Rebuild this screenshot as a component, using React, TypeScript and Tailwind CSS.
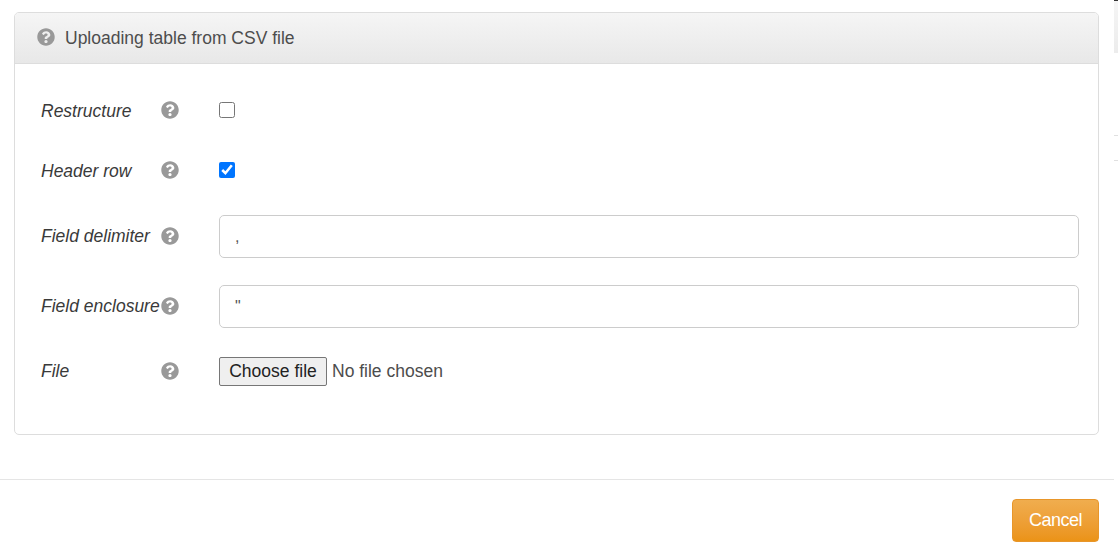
import { FaQuestionCircle } from "react-icons/fa";

function Row({
  label,
  h,
  mb,
  labelShift,
  iconShift,
  children,
}: {
  label: string;
  h: string;
  mb: string;
  labelShift: string;
  iconShift: string;
  children: React.ReactNode;
}) {
  return (
    <div className={`flex items-center ${h} ${mb}`}>
      <label className={`w-[120px] shrink-0 text-[17.5px] leading-[22px] italic text-[#3a3a3a] whitespace-nowrap ${labelShift}`}>{label}</label>
      <FaQuestionCircle className={`w-[18px] h-[18px] text-[#999] shrink-0 ${iconShift}`} />
      <div className="ml-[40px] flex-1 flex items-center">{children}</div>
    </div>
  );
}

const inputCls =
  "w-full h-[43px] border border-[#ccc] rounded-[5px] bg-white pl-[15px] pr-3 text-[16px] text-[#555] outline-none";

export default function App() {
  return (
    <div className="flex w-[1118px] h-[556px] bg-white overflow-hidden font-['Liberation_Sans',Arial,sans-serif]">
      <div className="w-[1114px] shrink-0 flex flex-col">
        <div className="pt-[12px] pl-[14px] pr-[15px]">
          <div className="h-[423px] border border-[#ddd] rounded-[5px] overflow-hidden">
            <div className="h-[51px] flex items-center pl-[22px] border-b border-[#ddd] bg-gradient-to-b from-[#f5f5f5] to-[#e8e8e8]">
              <FaQuestionCircle className="w-[18px] h-[18px] text-[#999] mb-[3px]" />
              <span className="ml-[10px] text-[17.5px] text-[#4d4d4d]">Uploading table from CSV file</span>
            </div>
            <div className="pl-[26px] pr-[19px] pt-[35px]">
              <Row label="Restructure" h="h-[22px]" mb="mb-[38px]" labelShift="translate-y-[1px]" iconShift="">
                <input type="checkbox" className="w-4 h-4 m-0" />
              </Row>
              <Row label="Header row" h="h-[22px]" mb="mb-[34px]" labelShift="translate-y-[1px]" iconShift="">
                <input type="checkbox" defaultChecked className="w-4 h-4 m-0" />
              </Row>
              <Row label="Field delimiter" h="h-[43px]" mb="mb-[27px]" labelShift="-translate-y-[1px]" iconShift="-translate-y-[1px]">
                <input type="text" defaultValue="," className={inputCls} />
              </Row>
              <Row label="Field enclosure" h="h-[43px]" mb="mb-[29px]" labelShift="-translate-y-[1px]" iconShift="-translate-y-[1px]">
                <input type="text" defaultValue={'"'} className={inputCls} />
              </Row>
              <Row label="File" h="h-[29px]" mb="mb-0" labelShift="-translate-y-[1px]" iconShift="-translate-y-[1px]">
                <button
                  type="button"
                  className="w-[108px] h-[29px] bg-[#efefef] border border-[#767676] rounded-[2px] text-[17.5px] text-[#222] shrink-0"
                >
                  Choose file
                </button>
                <span className="ml-[5px] text-[17.5px] text-[#4d4d4d]">No file chosen</span>
              </Row>
            </div>
          </div>
        </div>
        <div className="mt-[44px] border-t border-[#e5e5e5] flex justify-end pt-[19px] pr-[15px]">
          <button className="w-[87px] h-[43px] rounded-[4px] border border-[#e8962a] bg-gradient-to-b from-[#f0ad4e] to-[#eb9316] text-white text-[18px] tracking-[-0.5px]">
            Cancel
          </button>
        </div>
      </div>
      <div className="flex-1 flex flex-col">
        <div className="h-[53px] bg-gradient-to-b from-[#f5f5f5] to-[#ececec] border-t border-[#333]" />
        <div className="h-[82px]" />
        <div className="h-[26px] border-y border-[#e0e0e0]" />
      </div>
    </div>
  );
}
